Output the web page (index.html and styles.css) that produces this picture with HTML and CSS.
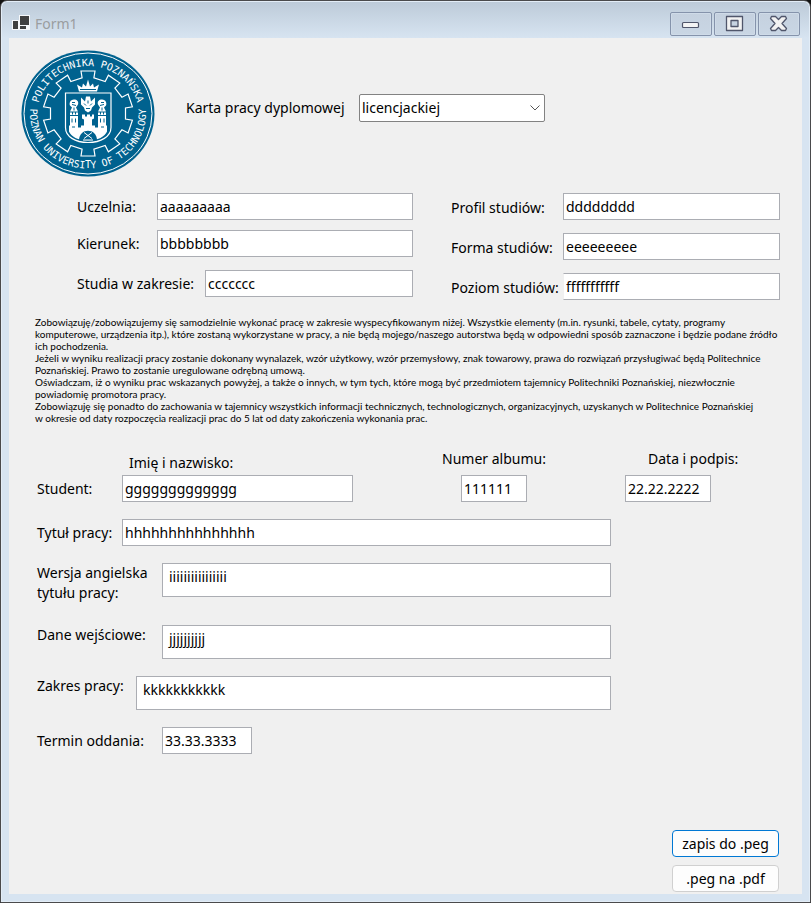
FILE: index.html
```html
<!DOCTYPE html>
<html lang="pl">
<head>
<meta charset="utf-8">
<title>Form1</title>
<link rel="stylesheet" href="styles.css">
</head>
<body>
<div class="window">
  <header class="titlebar">
    <svg class="app-icon" width="20" height="18" viewBox="0 0 20 18" aria-hidden="true">
      <path d="M0 5H7V0H18V15H0Z" fill="#f6f8fa"/>
      <path d="M1 6H6V14H1ZM8 1H17V10H8ZM8 11H14V14H8Z" fill="#404040"/>
    </svg>
    <h1 class="title">Form1</h1>
    <div class="caption-buttons">
      <button type="button" class="caption" aria-label="Minimalizuj">
        <svg width="20" height="18" viewBox="0 0 20 18"><rect x="1.5" y="7.500" width="16" height="5" rx="1" fill="#f4f4f4" stroke="#50566b" stroke-width="1.200"/></svg>
      </button>
      <button type="button" class="caption" aria-label="Maksymalizuj">
        <svg width="20" height="18" viewBox="0 0 20 18"><path d="M1.500 1.500H17.500V15.500H1.500ZM6 5.500V11.500H13V5.500Z" fill="#f2f2f2" fill-rule="evenodd" stroke="#50566b" stroke-width="1.300" stroke-linejoin="round"/></svg>
      </button>
      <button type="button" class="caption" aria-label="Zamknij">
        <svg width="20" height="18" viewBox="0 0 20 18"><path d="M2.500 1.500H6.500L9.500 4.500L12.500 1.500H16.500L17.500 3.500L13 8.500L17.500 13.500L16.500 15.500H12.500L9.500 12.500L6.500 15.500H2.500L1.500 13.500L6 8.500L1.500 3.500Z" fill="#f2f2f2" stroke="#50566b" stroke-width="1.300" stroke-linejoin="round"/></svg>
      </button>
    </div>
  </header>

  <form class="client">
    <div class="intro">
      <svg class="logo" width="134" height="127" viewBox="0 0 134 127" role="img" aria-label="Politechnika Poznańska">
        <defs>
          <path id="arc-top" d="M16.500 63.500A50.500 47.500 0 0 1 117.500 63.500"/>
          <path id="arc-bottom" d="M12 46A58 55 0 1 0 122 46"/>
          <path id="gear-half" d="M0 -42.500H7L5.900 -35.600L17.200 -32L20.400 -38.300L31.800 -30.400L26.900 -25.500L33.900 -16.300L40.100 -19.500L44.400 -6.700L37.500 -5.600V5.600L44.400 6.700L40.100 19.500L33.900 16.300L26.900 25.500L31.800 30.400L20.400 38.300L17.200 32L5.900 35.600L7 42.500H0"/>
          <g id="tower">
            <path d="M-18 -1H-16V1H-15V-1H-13V1H-12V-1H-10V13H-18Z" fill="#fff"/>
            <path d="M-14 -14C-18 -14 -19 -10 -18 -8L-16 -6L-18 -2H-10L-12 -6L-10 -9C-9 -12 -11 -14 -14 -14Z" fill="#fff"/>
            <path d="M-16 -11H-13M-16 -9L-12 -8M-14 -6V-3M-16 9V5M-12.500 9V5M-18 2H-10" stroke="#00628f" fill="none"/>
          </g>
        </defs>
        <ellipse cx="67" cy="63.500" rx="66.500" ry="63" fill="#00628f"/>
        <ellipse cx="67" cy="63.500" rx="64" ry="60.500" fill="none" stroke="#fff"/>
        <text class="seal-text"><textPath href="#arc-top" startOffset="50%">POLITECHNIKA POZNAŃSKA</textPath></text>
        <text class="seal-text"><textPath href="#arc-bottom" startOffset="50%">POZNAN UNIVERSITY OF TECHNOLOGY</textPath></text>
        <g transform="translate(67 63.500)">
          <g fill="none" stroke="#fff" stroke-width="1.200">
            <use href="#gear-half"/>
            <use href="#gear-half" transform="scale(-1 1)"/>
            <path d="M-22.500 -20.500H23V14C23 23 13 29 0 29C-13 29 -22.500 23 -22.500 14Z"/>
          </g>
          <path d="M-11 -29L-6 -26L-5 -30L-2 -27L0 -34L2 -27L5 -30L6 -26L11 -29L9 -22H-9Z" fill="#fff"/>
          <path d="M-8 -24H8" stroke="#00628f" stroke-width="1"/>
          <use href="#tower"/>
          <use href="#tower" transform="scale(-1 1)"/>
          <path d="M-7 -16L-3 -12L-2 -17H2L3 -12L7 -16V-9L4 -6L3 -3L0 -1L-3 -3L-4 -6L-7 -9Z" fill="#fff"/>
          <path d="M-4 -10L-2 -8M4 -10L2 -8M0 -13V-10M-2 -5H2" stroke="#00628f"/>
          <path d="M-6 1H-3V3H-1V1H2V3H4V1H6V5L4 6V13H-4V6L-6 5Z" fill="#fff"/>
          <path d="M-19 12H-16V14H-13V12H-10V14H-7V12H7V14H10V12H13V14H16V12H19V18C17 23 10 27 0 27C-10 27 -17 23 -19 18Z" fill="#fff"/>
          <path d="M-9 27C-9 14 9 14 9 27Z" fill="#00628f"/>
          <path d="M-4 19L4 25M4 19L-4 25M-5 26.500H5" stroke="#fff"/>
        </g>
      </svg>
      <label class="intro-label" for="rodzaj">Karta pracy dyplomowej</label>
      <span class="select-box">
        <select id="rodzaj"><option>licencjackiej</option></select>
        <svg class="chevron" width="12" height="8" viewBox="0 0 12 8" aria-hidden="true"><path d="M1.500 1.500L6 6L10.500 1.500" fill="none" stroke="#555"/></svg>
      </span>
    </div>

    <div class="studies">
      <div class="studies-left">
        <div class="row"><label for="uczelnia">Uczelnia:</label><input id="uczelnia" type="text" value="aaaaaaaaa"></div>
        <div class="row"><label for="kierunek">Kierunek:</label><input id="kierunek" type="text" value="bbbbbbbb"></div>
        <div class="row row-scope"><label for="zakres-studiow">Studia w zakresie:</label><input id="zakres-studiow" type="text" value="ccccccc"></div>
      </div>
      <div class="studies-right">
        <div class="row"><label for="profil">Profil studiów:</label><input id="profil" type="text" value="dddddddd"></div>
        <div class="row"><label for="forma">Forma studiów:</label><input id="forma" type="text" value="eeeeeeeee"></div>
        <div class="row"><label for="poziom">Poziom studiów:</label><input id="poziom" class="open-left" type="text" value="fffffffffff"></div>
      </div>
    </div>

    <p class="statement">Zobowiązuję/zobowiązujemy się samodzielnie wykonać pracę w zakresie wyspecyfikowanym niżej. Wszystkie elementy (m.in. rysunki, tabele, cytaty, programy<br>
komputerowe, urządzenia itp.), które zostaną wykorzystane w pracy, a nie będą mojego/naszego autorstwa będą w odpowiedni sposób zaznaczone i będzie podane źródło<br>
ich pochodzenia.<br>
Jeżeli w wyniku realizacji pracy zostanie dokonany wynalazek, wzór użytkowy, wzór przemysłowy, znak towarowy, prawa do rozwiązań przysługiwać będą Politechnice<br>
Poznańskiej. Prawo to zostanie uregulowane odrębną umową.<br>
Oświadczam, iż o wyniku prac wskazanych powyżej, a także o innych, w tym tych, które mogą być przedmiotem tajemnicy Politechniki Poznańskiej, niezwłocznie<br>
powiadomię promotora pracy.<br>
Zobowiązuję się ponadto do zachowania w tajemnicy wszystkich informacji technicznych, technologicznych, organizacyjnych, uzyskanych w Politechnice Poznańskiej<br>
w okresie od daty rozpoczęcia realizacji prac do 5 lat od daty zakończenia wykonania prac.</p>

    <div class="student">
      <label class="head-name" for="student">Imię i nazwisko:</label>
      <label class="head-album" for="album">Numer albumu:</label>
      <label class="head-date" for="data">Data i podpis:</label>
      <label class="student-label" for="student">Student:</label>
      <input class="in-name" id="student" type="text" value="ggggggggggggg">
      <input class="in-album" id="album" type="text" value="111111">
      <input class="in-date" id="data" type="text" value="22.22.2222">
    </div>

    <div class="thesis">
      <div class="thesis-fields">
        <div class="row row-title"><label for="tytul">Tytuł pracy:</label><input id="tytul" type="text" value="hhhhhhhhhhhhhhh"></div>
        <div class="row row-area row-english"><label for="tytul-ang">Wersja angielska<br>tytułu pracy:</label><textarea id="tytul-ang" rows="1">iiiiiiiiiiiiiiii</textarea></div>
        <div class="row row-area"><label for="dane">Dane wejściowe:</label><textarea id="dane" rows="1">jjjjjjjjjj</textarea></div>
        <div class="row row-area row-range"><label for="zakres">Zakres pracy:</label><textarea id="zakres" rows="1">kkkkkkkkkkk</textarea></div>
        <div class="row row-deadline"><label for="termin">Termin oddania:</label><input id="termin" type="text" value="33.33.3333"></div>
      </div>
    </div>

    <div class="actions">
      <button type="button" class="action primary">zapis do .peg</button>
      <button type="button" class="action">.peg na .pdf</button>
    </div>
  </form>
</div>
</body>
</html>
```
FILE: styles.css
```css
* { box-sizing: border-box; }

body {
  margin: 0;
  background: #111;
  color: #000;
  font: 14px/20px "Noto Sans", "Open Sans", sans-serif;
}

.window {
  display: flex;
  flex-direction: column;
  min-height: 100vh;
  padding: 0 8px 8px;
  border: 1px solid #4a4a4c;
  border-radius: 7px 7px 0 0;
  background: linear-gradient(#bccad8, #d7e4f1 37px);
  box-shadow: inset 0 0 0 1px #e3edf7;
}

.titlebar {
  display: flex;
  align-items: center;
  height: 37px;
  padding: 8px 2px 0 3px;
}
.title {
  flex: 1;
  margin: 0 0 0 3px;
  color: #9a9da0;
  font-size: 14px;
  font-weight: 400;
}
.caption-buttons { display: flex; gap: 2px; }
.caption {
  display: grid;
  place-items: center;
  width: 42px;
  height: 24px;
  padding: 0;
  border: 1px solid #8593ab;
  border-radius: 2px;
  background: linear-gradient(#c5d1df, #c9d6e4);
  box-shadow: inset 0 0 0 1px #cfdbe8;
}

.client {
  display: flex;
  flex: 1;
  flex-direction: column;
  padding: 12px 0 2px;
  background: #f0f0f0;
}

input, select, textarea {
  width: 100%;
  min-width: 0;
  margin: 0;
  border: 1px solid #abadb3;
  border-radius: 0;
  background: #fff;
  color: #000;
  font: inherit;
}
input { height: 27px; padding: 0 2px; }
textarea {
  display: block;
  height: 34px;
  padding: 3px 6px;
  overflow: hidden;
  resize: none;
}
label { white-space: nowrap; }

.intro {
  display: grid;
  grid-template-columns: 165px 173px 186px;
  align-items: start;
  padding-left: 12px;
}
.logo { display: block; }
.seal-text {
  fill: #fff;
  font: 10px "DejaVu Sans Mono", monospace;
  text-anchor: middle;
}
.intro-label { padding-top: 48px; }
.select-box { position: relative; display: block; margin-top: 44px; }
.select-box select {
  display: block;
  height: 28px;
  padding: 0 2px;
  border-color: #828282;
  border-radius: 2px;
  appearance: none;
}
.chevron { position: absolute; top: 10px; right: 4px; pointer-events: none; }

.row {
  display: grid;
  grid-template-columns: 80px 1fr;
  align-items: center;
}

.studies {
  display: grid;
  grid-template-columns: 336fr 329fr;
  column-gap: 38px;
  margin-top: 16px;
  padding: 0 22px 0 68px;
}
.studies-left, .studies-right { display: flex; flex-direction: column; }
.studies-left { gap: 10px; }
.studies-right { gap: 13px; }
.studies-right .row { grid-template-columns: 112px 1fr; }
.studies-right label { padding-top: 2px; }
.studies-left .row-scope { grid-template-columns: 128px 1fr; margin-top: 3px; }
.open-left { border-left-color: #f0f0f0; }

.statement {
  margin: 16px 0 0;
  padding-left: 26px;
  font-family: Lato, "Noto Sans", sans-serif;
  font-size: 10px;
  line-height: 12px;
  white-space: nowrap;
}

.student {
  display: grid;
  grid-template-columns: 85px 231fr 90fr 102px 80fr 155px;
  grid-template-rows: 26px 27px;
  align-items: center;
  margin-top: 25px;
  padding: 0 22px 0 28px;
}
.head-name { grid-area: 1 / 2; align-self: end; padding: 0 0 2px 7px; }
.head-album { grid-area: 1 / 4; align-self: start; justify-self: center; }
.head-date { grid-area: 1 / 6; align-self: start; padding-left: 23px; }
.student-label { grid-area: 2 / 1; }
.in-name { grid-area: 2 / 2; }
.in-album { grid-area: 2 / 4; justify-self: center; width: 66px; }
.in-date { grid-area: 2 / 6; width: 86px; }

.thesis {
  display: grid;
  grid-template-columns: 574fr 169fr;
  margin-top: 17px;
  padding: 0 22px 0 28px;
}
.thesis-fields { display: flex; flex-direction: column; gap: 17px; }
.row-title { grid-template-columns: 85px 1fr; }
.row-area { grid-template-columns: 125px 1fr; align-items: start; }
.row-english { min-height: 45px; }
.row-range { grid-template-columns: 99px 1fr; }
.row-deadline { grid-template-columns: 125px 90px; }

.actions {
  display: flex;
  flex-direction: column;
  align-items: flex-end;
  gap: 8px;
  margin-top: auto;
  padding: 16px 23px 0 0;
}
.action {
  width: 107px;
  height: 27px;
  padding: 0;
  border: 1px solid #d0d0d0;
  border-radius: 4px;
  background: #fdfdfd;
  color: #000;
  font: inherit;
}
.primary { border-color: #0078d4; }
```
